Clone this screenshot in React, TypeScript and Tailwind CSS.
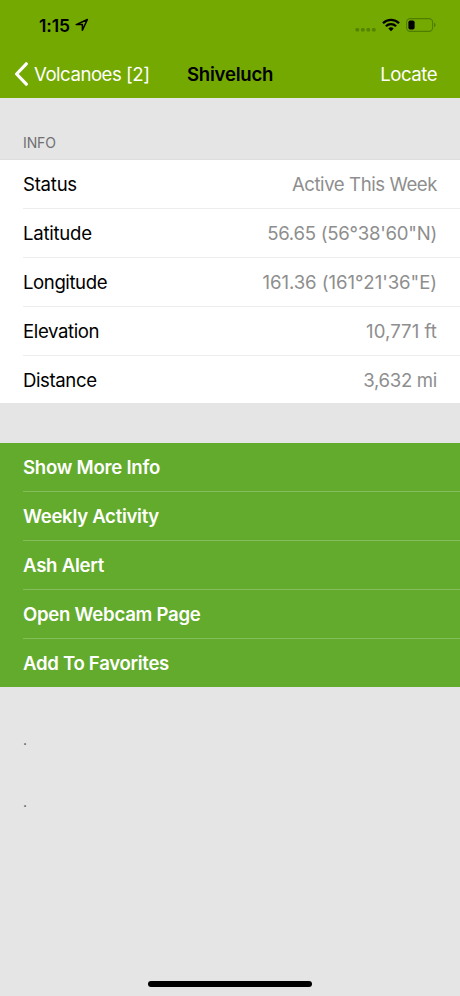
const info = [
  { label: 'Status', value: 'Active This Week', labelTracking: 'tracking-[-0.25px]', valueTracking: 'tracking-[-0.43px]' },
  { label: 'Latitude', value: '56.65 (56°38\'60"N)', labelTracking: 'tracking-[-0.25px]', valueTracking: 'tracking-[-0.26px]' },
  { label: 'Longitude', value: '161.36 (161°21\'36"E)', labelTracking: 'tracking-[-0.42px]', valueTracking: 'tracking-[-0.06px]' },
  { label: 'Elevation', value: '10,771 ft', labelTracking: 'tracking-[-0.4px]', valueTracking: 'tracking-[0.05px]' },
  { label: 'Distance', value: '3,632 mi', labelTracking: 'tracking-[-0.4px]', valueTracking: 'tracking-[-0.32px]' },
];

const actions = [
  { label: 'Show More Info', tracking: 'tracking-[-0.25px]' },
  { label: 'Weekly Activity', tracking: 'tracking-[-0.3px]' },
  { label: 'Ash Alert', tracking: 'tracking-[-0.25px]' },
  { label: 'Open Webcam Page', tracking: 'tracking-[-0.27px]' },
  { label: 'Add To Favorites', tracking: 'tracking-[-0.3px]' },
];

function StatusBar() {
  return (
    <div className="flex h-[50px] items-center justify-between pl-[39px] pr-[24px]">
      <div className="flex items-start gap-[5px] pt-px">
        <span className="text-[17.5px] font-semibold leading-5 tracking-[-0.1px]">1:15</span>
        <svg className="mt-[2px]" width="14" height="14" viewBox="0 0 14 14" fill="none" stroke="currentColor" strokeWidth="1.5" strokeLinejoin="round">
          <path d="M1.2 6.6 12.4 1.5 7.4 12.2V6.6Z" />
        </svg>
      </div>
      <div className="flex items-center">
        <svg width="22" height="16" viewBox="0 0 22 16" fill="#538300">
          <rect x="0.5" y="11" width="3.6" height="3.6" rx="1.3" />
          <rect x="6" y="11" width="3.6" height="3.6" rx="1.3" />
          <rect x="11.5" y="11" width="3.6" height="3.6" rx="1.3" />
          <rect x="17" y="11" width="3.6" height="3.6" rx="1.3" />
        </svg>
        <svg className="ml-[5px]" width="18" height="14" viewBox="0 0 18 14" fill="none" stroke="currentColor" strokeWidth="2.3">
          <path d="M1 5.2a11.4 11.4 0 0 1 16 0" />
          <path d="M3.9 8.2a7.2 7.2 0 0 1 10.2 0" />
          <path d="M6.3 10.5a3.9 3.9 0 0 1 5.4 0L9 13.2Z" fill="currentColor" stroke="none" />
        </svg>
        <svg className="ml-[6px]" width="30" height="14" viewBox="0 0 30 14" fill="none">
          <rect x="0.6" y="0.6" width="26" height="12.8" rx="3.6" stroke="#507e00" strokeWidth="1.1" />
          <rect x="2.4" y="2.4" width="6.2" height="9.2" rx="1.8" fill="#000" />
          <path d="M28 4.8c2 .7 2 3.7 0 4.4Z" fill="#507e00" />
        </svg>
      </div>
    </div>
  );
}

export default function App() {
  return (
    <div className="flex h-[996px] w-[460px] flex-col overflow-hidden bg-[#e5e5e5] font-['Inter',sans-serif] text-black">
      <header className="h-[98px] shrink-0 bg-[#73a900]">
        <StatusBar />
        <nav className="grid h-[48px] grid-cols-[187px_1fr_auto] items-center pr-[23px] text-[18.6px] leading-6">
          <div className="flex items-center pl-[14px] text-white">
            <svg width="15" height="24" viewBox="0 0 15 24" fill="none" stroke="currentColor" strokeWidth="3.2" strokeLinecap="round" strokeLinejoin="round">
              <path d="M12.3 1.8 2.6 12l9.7 10.2" />
            </svg>
            <span className="ml-[5px] whitespace-nowrap tracking-[-0.48px]">Volcanoes [2]</span>
          </div>
          <h1 className="font-semibold tracking-[-0.25px]">Shiveluch</h1>
          <span className="text-white tracking-[-0.5px]">Locate</span>
        </nav>
      </header>

      <h2 className="flex h-[62px] shrink-0 items-end border-b border-[#dedede] pb-[6px] pl-[23px] text-[14px] leading-5 tracking-[-0.1px] text-[#6f6f73]">INFO</h2>
      <div className="h-[243px] shrink-0 bg-white pl-[23px] text-[18.6px] leading-6">
        {info.map((row, i) => (
          <div key={row.label} className={`flex items-center justify-between pr-[23px] ${i < 4 ? 'h-[49px] border-b border-[#ededed]' : 'h-[48px]'}`}>
            <span className={row.labelTracking}>{row.label}</span>
            <span className={`text-[#8e8e8e] ${row.valueTracking}`}>{row.value}</span>
          </div>
        ))}
      </div>

      <div className="mt-[40px] h-[244px] shrink-0 bg-[#63ab2c] pl-[23px] text-[18.6px] font-semibold leading-6 text-white">
        {actions.map((row, i) => (
          <div key={row.label} className={`flex items-center ${i < 4 ? 'h-[49px] border-b border-[#85bd5b]' : 'h-[48px]'}`}>
            <span className={row.tracking}>{row.label}</span>
          </div>
        ))}
      </div>

      <p className="mt-[46px] pl-[23px] text-[14px] leading-[14px] text-[#505053]">.</p>
      <p className="mt-[48px] pl-[23px] text-[14px] leading-[14px] text-[#505053]">.</p>
      <div className="mb-[9px] mt-auto h-[6px] w-[164px] self-center rounded-full bg-black" />
    </div>
  );
}
